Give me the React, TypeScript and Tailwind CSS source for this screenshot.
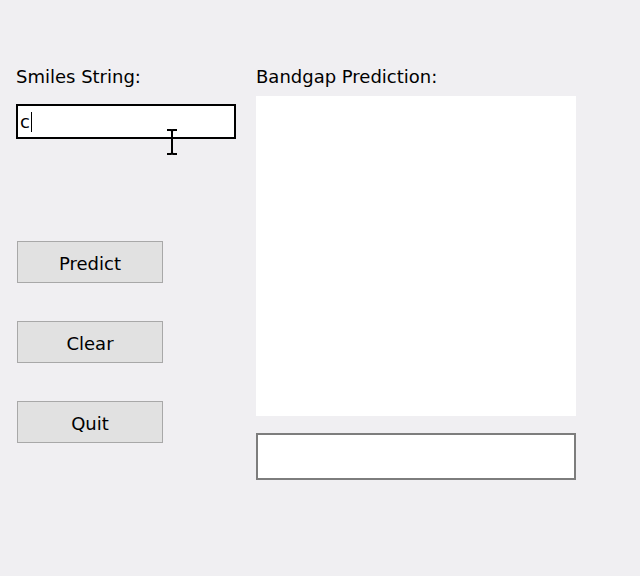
import React from "react";

const font = { fontFamily: '"DejaVu Sans", "Noto Sans", sans-serif' };

const Btn = ({ label }: { label: string }) => (
    <button className="w-[146px] h-[42px] bg-[#e1e1e1] border border-[#a8a8a8] text-[18px] text-black flex items-center justify-center pt-[2px]">
        {label}
    </button>
);

export default function App() {
    return (
        <div style={font} className="w-[640px] h-[576px] bg-[#f0eff2] flex pt-[66px] pl-4 relative text-black">
            <div className="w-[240px] flex flex-col">
                <p className="text-[18px] leading-[22px]">Smiles String:</p>
                <div className="mt-[16px] w-[220px] h-[35px] border-2 border-black bg-white flex items-center pl-[2px] text-[18px]">
                    <span>c</span>
                    <span className="w-px h-[20px] bg-black ml-px" />
                </div>
                <div className="mt-[102px] ml-px flex flex-col gap-[38px]">
                    <Btn label="Predict" />
                    <Btn label="Clear" />
                    <Btn label="Quit" />
                </div>
            </div>

            <div className="flex flex-col">
                <p className="text-[18px] leading-[22px]">Bandgap Prediction:</p>
                <div className="mt-[8px] w-[320px] h-[320px] bg-white" />
                <div className="mt-[17px] w-[320px] h-[47px] border-2 border-[#7d7d7d] bg-white" />
            </div>

            {/* mouse text cursor */}
            <svg className="absolute left-[165px] top-[128px]" width="14" height="28" viewBox="0 0 14 28">
                <path d="M2 2h4l1 1 1-1h4M7 3v22M2 26h4l1-1 1 1h4" stroke="#000" strokeWidth="2" fill="none" />
            </svg>
        </div>
    );
}
